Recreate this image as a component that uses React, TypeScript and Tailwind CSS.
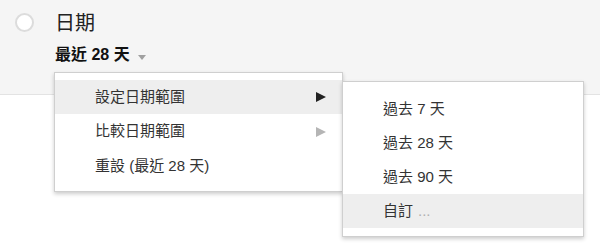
import React from 'react';

const font = { fontFamily: '"Liberation Sans", Arial, "Noto Sans CJK TC", sans-serif' };

const Arrow = ({ dark }: { dark: boolean }) => (
  <svg width="10" height="10" viewBox="0 0 10 10" className="shrink-0">
    <path d="M0 0 L10 5 L0 10 Z" fill={dark ? '#222' : '#b5b5b5'} />
  </svg>
);

const App: React.FC = () => {
  const subItems = ['過去 7 天', '過去 28 天', '過去 90 天'];

  return (
    <div className="relative h-[250px] w-[600px] overflow-hidden bg-white text-[#222]" style={font}>
      {/* Header */}
      <div className="h-[95px] border-b border-[#e3e3e3] bg-[#f5f5f5]">
        <div className="flex items-start pl-[15px] pt-[12px]">
          <div className="mt-[1px] size-[19px] rounded-full border-2 border-[#dcdcdc] bg-white" />
          <div className="ml-[21px] flex flex-col">
            <div className="text-[20px] leading-[22px]">日期</div>
            <div className="mt-[12px] flex items-center">
              <span className="text-[16px] font-bold leading-[18px] text-[#111]">最近 28 天</span>
              <svg width="8" height="5" viewBox="0 0 8 5" className="ml-[8px] mt-[4px]">
                <path d="M0 0 L8 0 L4 5 Z" fill="#a0a0a0" />
              </svg>
            </div>
          </div>
        </div>
      </div>

      {/* Main menu */}
      <div className="absolute left-[54px] top-[72px] w-[289px] border border-[#cfcfcf] bg-white py-[7px] shadow-[0_2px_4px_rgba(0,0,0,0.2)]">
        <div className="flex h-[34px] items-center justify-between bg-[#eeeeee] pl-[40px] pr-[16px] text-[15px] text-[#333]">
          <span>設定日期範圍</span>
          <Arrow dark />
        </div>
        <div className="flex h-[35px] items-center justify-between pl-[40px] pr-[16px] text-[15px] text-[#333]">
          <span>比較日期範圍</span>
          <Arrow dark={false} />
        </div>
        <div className="flex h-[35px] items-center pl-[40px] text-[15px] text-[#333]">
          <span>重設 (最近 28 天)</span>
        </div>

        {/* Submenu */}
        <div className="absolute left-[287px] top-[8px] w-[242px] border border-[#cfcfcf] bg-white py-[8px] pt-[10px] shadow-[0_2px_4px_rgba(0,0,0,0.2)]">
          {subItems.map((t) => (
            <div key={t} className="flex h-[34px] items-center pl-[40px] text-[15px] text-[#333]">
              {t}
            </div>
          ))}
          <div className="flex h-[34px] items-center bg-[#eeeeee] pl-[40px] text-[15px] text-[#333]">
            自訂 <span className="ml-[5px] text-[#b0b0b0]">...</span>
          </div>
        </div>
      </div>
    </div>
  );
};

export default App;
